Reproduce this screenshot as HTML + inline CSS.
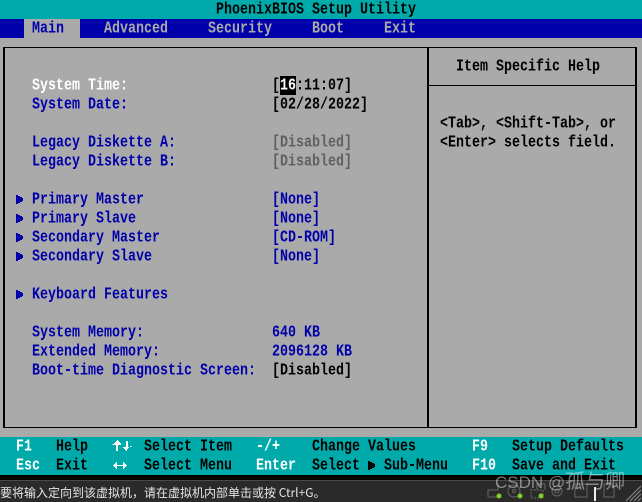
<!DOCTYPE html>
<html><head><meta charset="utf-8">
<style>
html,body{margin:0;padding:0;background:#aaa;}
#p{position:relative;width:642px;height:502px;overflow:hidden;background:#aaa;}
.b{position:absolute;}
.t{position:absolute;font:bold 13.33px/19px "Liberation Mono",monospace;white-space:pre;height:19px;transform:translateY(1px) scaleY(1.25);transform-origin:0 50%;color:#000;}
.t .w{color:#fff}
.w{color:#fff}.u{color:#0000aa}.g{color:#606060}.l{color:#aaa}
</style></head><body><div id="p">
<div class="b" style="left:0;top:0;width:642px;height:19px;background:#00aaaa"></div>
<div class="b" style="left:0;top:19px;width:642px;height:19px;background:#0000aa"></div>
<div class="b" style="left:24px;top:19px;width:56px;height:19px;background:#aaa"></div>
<div class="b" style="left:3px;top:47px;width:634px;height:381px;border:solid #000;border-width:1px 2px;box-sizing:border-box"></div>
<div class="b" style="left:427px;top:47px;width:2px;height:381px;background:#000"></div>
<div class="b" style="left:428px;top:85px;width:208px;height:1px;background:#000"></div>
<div class="b" style="left:0;top:437px;width:642px;height:38px;background:#00aaaa"></div>
<div class="b" style="left:0;top:475px;width:642px;height:5px;background:#000"></div>
<div class="b" style="left:0;top:480px;width:642px;height:22px;background:#2a2a2a;border-top:1px solid #4a4a4a;box-sizing:border-box"></div>
<div class="b" style="left:280px;top:76px;width:16px;height:19px;background:#000"></div>

<span class="t" style="left:216px;top:0">PhoenixBIOS Setup Utility</span>
<span class="t u" style="left:32px;top:19px">Main</span>
<span class="t l" style="left:104px;top:19px">Advanced</span>
<span class="t l" style="left:208px;top:19px">Security</span>
<span class="t l" style="left:312px;top:19px">Boot</span>
<span class="t l" style="left:384px;top:19px">Exit</span>

<span class="t w" style="left:32px;top:76px">System Time:</span>
<span class="t u" style="left:32px;top:95px">System Date:</span>
<span class="t" style="left:272px;top:76px">[<span class="w">16</span>:11:07]</span>
<span class="t" style="left:272px;top:95px">[02/28/2022]</span>
<span class="t u" style="left:32px;top:133px">Legacy Diskette A:</span>
<span class="t u" style="left:32px;top:152px">Legacy Diskette B:</span>
<span class="t g" style="left:272px;top:133px">[Disabled]</span>
<span class="t g" style="left:272px;top:152px">[Disabled]</span>

<span class="t u" style="left:32px;top:190px">Primary Master</span>
<span class="t u" style="left:32px;top:209px">Primary Slave</span>
<span class="t u" style="left:32px;top:228px">Secondary Master</span>
<span class="t u" style="left:32px;top:247px">Secondary Slave</span>
<span class="t u" style="left:32px;top:285px">Keyboard Features</span>
<span class="t u" style="left:272px;top:190px">[None]</span>
<span class="t u" style="left:272px;top:209px">[None]</span>
<span class="t u" style="left:272px;top:228px">[CD-ROM]</span>
<span class="t u" style="left:272px;top:247px">[None]</span>

<svg class="b" style="left:0;top:0" width="642" height="502" fill="#0000aa">
<path d="M16 195h2v1h2v1h2v1h1v3h-1v1h-2v1h-2v1h-2z"/>
<path d="M16 214h2v1h2v1h2v1h1v3h-1v1h-2v1h-2v1h-2z"/>
<path d="M16 233h2v1h2v1h2v1h1v3h-1v1h-2v1h-2v1h-2z"/>
<path d="M16 252h2v1h2v1h2v1h1v3h-1v1h-2v1h-2v1h-2z"/>
<path d="M16 290h2v1h2v1h2v1h1v3h-1v1h-2v1h-2v1h-2z"/>
<path fill="#000" d="M368 461h2v1h2v1h2v1h1v3h-1v1h-2v1h-2v1h-2z"/>
<g fill="#fff">
<path d="M113 445h2v-1h1v-1h1v-1h1v-1h1v1h1v1h1v1h1v1h0v1h-3v6h-2v-6h-3z" transform="translate(-1 -1)"/>
<path d="M127 446h-2v1h-1 0v1h-1v1h-1v1h0 0v1h-1v-1h-1v-1h-1v-1h-1v-1h3v-6h2v6h3z" transform="translate(5 0)"/>
<path d="M113 465h1v-1h1v-1h1v-1h1v3h6v-3h1v1h1v1h1v1h1v1h-1v1h-1v1h-1v1h-1v-3h-6v3h-1v-1h-1v-1h-1v-1h-1z"/>
</g>
</svg>

<span class="t u" style="left:32px;top:323px">System Memory:</span>
<span class="t u" style="left:32px;top:342px">Extended Memory:</span>
<span class="t u" style="left:32px;top:361px">Boot-time Diagnostic Screen:</span>
<span class="t u" style="left:272px;top:323px">640 KB</span>
<span class="t u" style="left:272px;top:342px">2096128 KB</span>
<span class="t" style="left:272px;top:361px">[Disabled]</span>

<span class="t" style="left:456px;top:57px">Item Specific Help</span>
<span class="t" style="left:440px;top:114px">&lt;Tab&gt;, &lt;Shift-Tab&gt;, or</span>
<span class="t" style="left:440px;top:133px">&lt;Enter&gt; selects field.</span>

<span class="t w" style="left:16px;top:437px">F1</span>
<span class="t" style="left:56px;top:437px">Help</span>
<span class="t" style="left:144px;top:437px">Select Item</span>
<span class="t w" style="left:256px;top:437px">-/+</span>
<span class="t" style="left:312px;top:437px">Change Values</span>
<span class="t w" style="left:472px;top:437px">F9</span>
<span class="t" style="left:512px;top:437px">Setup Defaults</span>
<span class="t w" style="left:16px;top:456px">Esc</span>
<span class="t" style="left:56px;top:456px">Exit</span>
<span class="t" style="left:144px;top:456px">Select Menu</span>
<span class="t w" style="left:256px;top:456px">Enter</span>
<span class="t" style="left:312px;top:456px">Select</span>
<span class="t" style="left:384px;top:456px">Sub-Menu</span>
<span class="t w" style="left:472px;top:456px">F10</span>
<span class="t" style="left:512px;top:456px">Save and Exit</span>

<span class="b" style="left:0;top:484px;font:12px/18px 'Noto Sans CJK SC','Liberation Sans',sans-serif;color:#e6e6e6;white-space:pre">要将输入定向到该虚拟机，请在虚拟机内部单击或按 Ctrl+G。</span>

<svg class="b" style="left:0;top:0" width="642" height="502" fill="none" stroke="#666" stroke-width="1">
<path d="M488 497v-7h10v-6M488 497h12"/>
<circle cx="514" cy="491" r="6"/><circle cx="514" cy="491" r="1.5"/>
<rect x="531" y="490" width="12" height="8" stroke-dasharray="2 1"/><path d="M537 490v-6h8v6"/>
<circle cx="557" cy="491" r="5"/><circle cx="557" cy="491" r="2"/>
<rect x="575" y="484" width="12" height="13"/>
<path d="M604 484h7l3 3v10h-10z"/>
<g fill="#80cc28" stroke="none"><circle cx="499" cy="496" r="2.5"/><circle cx="520" cy="496" r="2.5"/><circle cx="541" cy="496" r="2.5"/></g>
<path d="M626 501l15-15M630 501l11-11M634 501l7-7M638 501l3-3" stroke="#888"/>
<path d="M595 487v14" stroke="#eee" stroke-width="2"/>
</svg>
<span class="b" style="left:495px;top:469px;font:17px/26px 'Liberation Sans','Noto Sans CJK SC',sans-serif;color:rgba(255,255,255,.45);white-space:pre">CSDN @<span style="font-size:20px">孤与卿</span></span>
</div></body></html>
